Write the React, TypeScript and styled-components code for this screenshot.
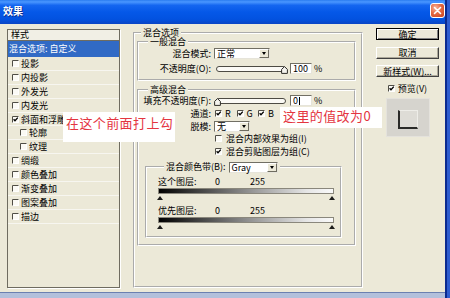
import React from "react";
import styled, { createGlobalStyle } from "styled-components";

const FONT = `"Noto Sans CJK SC", "Noto Sans", "DejaVu Sans", sans-serif`;

const GlobalStyle = createGlobalStyle`
  *, *::before, *::after { box-sizing: border-box; }
  html, body { margin: 0; padding: 0; }
  body { width: 450px; height: 298px; overflow: hidden; background: #2e5ccf; font-family: ${FONT}; }
`;

const Screen = styled.div`
  position: relative;
  width: 450px;
  height: 298px;
  overflow: hidden;
  background: #2e5ccf;
  font-family: ${FONT};
  font-size: 9px;
  line-height: 11px;
  color: #000;
`;

const Window = styled.div`
  width: 447px;
  height: 298px;
  border-right: 2px solid #0b2a8f;
  display: flex;
  flex-direction: column;
`;

const TitleBar = styled.div`
  flex: none;
  height: 24px;
  display: flex;
  align-items: flex-start;
  justify-content: space-between;
  padding: 0 0 0 3px;
  background: linear-gradient(180deg, #2a7cf0 0%, #4a97ff 8%, #1466f0 22%, #0558e8 50%, #0252e0 80%, #0a44c4 100%);
`;

const Title = styled.span`
  margin-top: 5px;
  color: #fff;
  font-weight: 700;
  font-size: 10px;
  line-height: 12px;
  text-shadow: 1px 1px 0 #0b2c8c;
`;

const CloseButton = styled.div`
  margin-top: 3px;
  width: 15px;
  height: 15px;
  border: 1px solid #fff;
  border-radius: 3px;
  background: radial-gradient(circle at 35% 30%, #f7b59c 0%, #e56a43 45%, #c8401c 100%);
  display: flex;
  align-items: center;
  justify-content: center;
`;

const Body = styled.div`
  flex: 1;
  display: grid;
  grid-template-columns: 113px 230px 63px;
  column-gap: 13px;
  padding: 5px 0 4px 7px;
  background: #ece9d8;
  min-height: 0;
`;

const FrameBottom = styled.div`
  flex: none;
  height: 6px;
  border-top: 1px solid #6c80b0;
  background: #b3c0db;
`;

/* ---------- style list ---------- */
const StyleList = styled.div`
  background: #ece9d8;
  border: 1px solid #6f6c60;
  box-shadow: 1px 1px 0 #fff;
  display: flex;
  flex-direction: column;
`;

const ListHeader = styled.div`
  flex: none;
  height: 11px;
  line-height: 10px;
  padding-left: 3px;
  border-bottom: 1px solid #6f6c60;
  background: #f1efe5;
`;

const ListRow = styled.div<{ $selected?: boolean; $indent?: boolean }>`
  flex: none;
  height: ${(p) => (p.$selected ? "16px" : "13.9px")};
  display: flex;
  align-items: center;
  gap: 2px;
  padding-left: ${(p) => (p.$selected ? "1px" : p.$indent ? "12px" : "4px")};
  background: ${(p) => (p.$selected ? "#316ac5" : "transparent")};
  color: ${(p) => (p.$selected ? "#fff" : "#000")};
  border-bottom: 1px solid ${(p) => (p.$selected ? "#316ac5" : "#f7f6f0")};
`;

/* ---------- checkbox ---------- */
const CheckSvg = styled.svg`
  flex: none;
  display: block;
`;

function CheckBox({ checked }: { checked?: boolean }) {
  return (
    <CheckSvg width="7" height="7" viewBox="0 0 7 7">
      <rect x="0" y="0" width="7" height="7" fill="#fbfaf5" />
      <path d="M0.5 7V0.5H7" stroke="#4f4d45" strokeWidth="1" fill="none" />
      <path d="M0.5 6.5H6.5V0.5" stroke="#ffffff" strokeWidth="1" fill="none" />
      {checked && <path d="M1.6 3.2L3 4.8L5.8 1.6" stroke="#000" strokeWidth="1.3" fill="none" />}
    </CheckSvg>
  );
}

/* ---------- groups ---------- */
const Group = styled.fieldset<{ $mt?: number; $pad?: string; $mx?: string }>`
  margin: ${(p) => `${p.$mt ?? 0}px`} ${(p) => p.$mx ?? "0 0"};
  margin-bottom: 0;
  padding: ${(p) => p.$pad ?? "0"};
  border: 2px groove #ffffff;
  min-width: 0;
`;

const OptionsGroup = styled(Group)`
  margin: -1px 0 0 0;
  padding: 0 5px 0 2px;
  align-self: stretch;
`;

const Legend = styled.legend<{ $ml: number; $h?: number }>`
  margin-left: ${(p) => p.$ml}px;
  padding: 0 2px;
  height: ${(p) => p.$h ?? 10}px;
  line-height: ${(p) => p.$h ?? 10}px;
  display: flex;
  align-items: center;
  gap: 3px;
`;

const Row = styled.div<{ $mt?: number }>`
  display: flex;
  align-items: center;
  height: 11px;
  margin-top: ${(p) => p.$mt ?? 0}px;
`;

const FieldLabel = styled.span`
  flex: none;
  width: 75px;
  padding-right: 3px;
  text-align: right;
  white-space: nowrap;
`;

const Select = styled.div<{ $w: number }>`
  flex: none;
  width: ${(p) => p.$w}px;
  height: 11px;
  background: #fff;
  border: 1px solid;
  border-color: #716f64 #e6e4da #e6e4da #716f64;
  display: flex;
  align-items: center;
  justify-content: space-between;
  padding-left: 2px;
  line-height: 9px;
`;

const DropButton = styled.span`
  width: 10px;
  height: 9px;
  background: #ece9d8;
  border: 1px solid;
  border-color: #fff #6f6c60 #6f6c60 #fff;
  display: flex;
  align-items: center;
  justify-content: center;
  &::after {
    content: "";
    border-left: 2.5px solid transparent;
    border-right: 2.5px solid transparent;
    border-top: 3px solid #000;
  }
`;

const Slider = styled.div`
  position: relative;
  flex: none;
  width: 70px;
  height: 11px;
  margin-left: 2px;
  display: flex;
  align-items: center;
`;

const Track = styled.div`
  width: 100%;
  height: 6px;
  border: 1px solid #4d4b44;
  border-radius: 3px;
  background: #fbfaf6;
`;

const ThumbSvg = styled.svg<{ $atEnd: boolean }>`
  position: absolute;
  top: 3px;
  ${(p) => (p.$atEnd ? "right: -2px;" : "left: -2px;")}
`;

function SliderControl({ atEnd }: { atEnd: boolean }) {
  return (
    <Slider>
      <Track />
      <ThumbSvg $atEnd={atEnd} width="7" height="8" viewBox="0 0 7 8">
        <path d="M3.5 0.6L6.4 3.4V7.4H0.6V3.4Z" fill="#f4f3ee" stroke="#2d2c28" strokeWidth="1" />
      </ThumbSvg>
    </Slider>
  );
}

const NumberBox = styled.div`
  flex: none;
  width: 22px;
  height: 11px;
  margin-left: 4px;
  background: #fff;
  border: 1px solid;
  border-color: #716f64 #e6e4da #e6e4da #716f64;
  padding-left: 2px;
  line-height: 9px;
  display: flex;
  align-items: center;
`;

const Caret = styled.span`
  display: inline-block;
  width: 1px;
  height: 8px;
  margin-left: 1px;
  background: #000;
`;

const Unit = styled.span`
  margin-left: 2px;
`;

const Channel = styled.span`
  flex: none;
  width: 21.5px;
  display: flex;
  align-items: center;
  gap: 3px;
  padding-left: 1px;
`;

const CheckLine = styled.span`
  display: flex;
  align-items: center;
  gap: 4px;
  padding-left: 1px;
  white-space: nowrap;
`;

/* ---------- colour band ---------- */
const BandRow = styled.div<{ $mt: number }>`
  display: grid;
  grid-template-columns: 57px 35px auto;
  height: 10px;
  line-height: 10px;
  margin-top: ${(p) => p.$mt}px;
`;

const GradientBar = styled.div`
  height: 6px;
  margin-top: 1px;
  border: 1px solid #8a877c;
  background: linear-gradient(90deg, #000 0%, #3a3a3a 20%, #9a9a9a 55%, #e6e6e6 85%, #fafafa 100%);
`;

const Markers = styled.div`
  display: flex;
  justify-content: space-between;
  margin: 2px -1px 0;
  height: 4px;
`;

const Marker = styled.span`
  width: 0;
  height: 0;
  border-left: 3px solid transparent;
  border-right: 3px solid transparent;
  border-bottom: 4px solid #1d1d1b;
`;

/* ---------- action column ---------- */
const Actions = styled.div`
  margin-top: -1px;
  display: flex;
  flex-direction: column;
  align-items: stretch;
`;

const Button = styled.div<{ $default?: boolean; $mt?: number }>`
  height: 12px;
  margin-top: ${(p) => p.$mt ?? 0}px;
  display: flex;
  align-items: center;
  justify-content: center;
  background: #ece9d8;
  border: 1px solid;
  border-color: ${(p) => (p.$default ? "#000" : "#fff #404040 #404040 #fff")};
  box-shadow: ${(p) =>
    p.$default ? "inset 1px 1px 0 #fff, inset -1px -1px 0 #808080" : "inset -1px -1px 0 #aca899"};
  line-height: 9px;
  white-space: nowrap;
`;

const PreviewToggle = styled.div`
  margin-top: 7px;
  height: 8px;
  display: flex;
  align-items: center;
  justify-content: center;
  gap: 3px;
`;

const PreviewBox = styled.div`
  margin: 6px auto 0;
  width: 44px;
  height: 39px;
  background: #d6d4ce;
  border: 1px solid #e4e2dc;
  display: flex;
  justify-content: center;
  padding-top: 11px;
`;

const PreviewSwatch = styled.div`
  width: 20px;
  height: 19px;
  background: #dedcd6;
  border: 1px solid;
  border-color: #eeede8 #eeede8 #2a2a28 #2a2a28;
  border-width: 1px 1px 2px 2px;
`;

/* ---------- notes ---------- */
const Note = styled.div<{ $x: number; $y: number; $w: number; $h: number; $pt: number }>`
  position: absolute;
  left: ${(p) => p.$x}px;
  top: ${(p) => p.$y}px;
  width: ${(p) => p.$w}px;
  height: ${(p) => p.$h}px;
  padding: ${(p) => p.$pt}px 0 0 3px;
  background: #fff;
  color: #e4353f;
  font-size: 13px;
  line-height: 14px;
  letter-spacing: 0.4px;
  white-space: nowrap;
`;

const listItems: { label: string; checked?: boolean; indent?: boolean }[] = [
  { label: "投影" },
  { label: "内投影" },
  { label: "外发光" },
  { label: "内发光" },
  { label: "斜面和浮雕", checked: true },
  { label: "轮廓", indent: true },
  { label: "纹理", indent: true },
  { label: "绸缎" },
  { label: "颜色叠加" },
  { label: "渐变叠加" },
  { label: "图案叠加" },
  { label: "描边" },
];

export default function App() {
  return (
    <Screen>
      <GlobalStyle />
      <Window>
        <TitleBar>
          <Title>效果</Title>
          <CloseButton>
            <svg width="9" height="9" viewBox="0 0 9 9">
              <path d="M1.5 1.5L7.5 7.5M7.5 1.5L1.5 7.5" stroke="#fff" strokeWidth="1.6" strokeLinecap="round" />
            </svg>
          </CloseButton>
        </TitleBar>
        <Body>
          <StyleList>
            <ListHeader>样式</ListHeader>
            <ListRow $selected>混合选项: 自定义</ListRow>
            {listItems.map((it) => (
              <ListRow key={it.label} $indent={it.indent}>
                <CheckBox checked={it.checked} />
                <span>{it.label}</span>
              </ListRow>
            ))}
          </StyleList>

          <OptionsGroup>
            <Legend $ml={4}>混合选项</Legend>
            <Group $mt={-1} $pad="0 0 5px 0">
              <Legend $ml={9}>一般混合</Legend>
              <Row $mt={1}>
                <FieldLabel>混合模式:</FieldLabel>
                <Select $w={56}>
                  正常
                  <DropButton />
                </Select>
              </Row>
              <Row $mt={4}>
                <FieldLabel>不透明度(O):</FieldLabel>
                <SliderControl atEnd />
                <NumberBox>100</NumberBox>
                <Unit>%</Unit>
              </Row>
            </Group>
            <Group $mt={4} $pad="0 0 6px 0">
              <Legend $ml={9}>高级混合</Legend>
              <Row $mt={0}>
                <FieldLabel>填充不透明度(F):</FieldLabel>
                <SliderControl atEnd={false} />
                <NumberBox>
                  0<Caret />
                </NumberBox>
                <Unit>%</Unit>
              </Row>
              <Row $mt={1.75}>
                <FieldLabel>通道:</FieldLabel>
                <Channel>
                  <CheckBox checked />R
                </Channel>
                <Channel>
                  <CheckBox checked />G
                </Channel>
                <Channel>
                  <CheckBox checked />B
                </Channel>
              </Row>
              <Row $mt={1.75}>
                <FieldLabel>脱模:</FieldLabel>
                <Select $w={36}>
                  无
                  <DropButton />
                </Select>
              </Row>
              <Row $mt={1.75}>
                <FieldLabel />
                <CheckLine>
                  <CheckBox />
                  混合内部效果为组(I)
                </CheckLine>
              </Row>
              <Row $mt={1.75}>
                <FieldLabel />
                <CheckLine>
                  <CheckBox checked />
                  混合剪贴图层为组(C)
                </CheckLine>
              </Row>
              <Group $mt={4} $mx="12px 0 6px" $pad="0 6px 7px 11px">
                <Legend $ml={6} $h={12}>
                  <span>混合颜色带(B):</span>
                  <Select $w={49}>
                    Gray
                    <DropButton />
                  </Select>
                </Legend>
                <BandRow $mt={4}>
                  <span>这个图层:</span>
                  <span>0</span>
                  <span>255</span>
                </BandRow>
                <GradientBar />
                <Markers>
                  <Marker />
                  <Marker />
                </Markers>
                <BandRow $mt={6}>
                  <span>优先图层:</span>
                  <span>0</span>
                  <span>255</span>
                </BandRow>
                <GradientBar />
                <Markers>
                  <Marker />
                  <Marker />
                </Markers>
              </Group>
            </Group>
          </OptionsGroup>

          <Actions>
            <Button $default>确定</Button>
            <Button $mt={6.5}>取消</Button>
            <Button $mt={6.5}>新样式(W)...</Button>
            <PreviewToggle>
              <CheckBox checked />
              <span>预览(V)</span>
            </PreviewToggle>
            <PreviewBox>
              <PreviewSwatch />
            </PreviewBox>
          </Actions>
        </Body>
        <FrameBottom />
      </Window>

      <Note $x={63} $y={112} $w={112} $h={30} $pt={4}>
        在这个前面打上勾
      </Note>
      <Note $x={280} $y={107} $w={102} $h={21} $pt={2}>
        这里的值改为0
      </Note>
    </Screen>
  );
}
